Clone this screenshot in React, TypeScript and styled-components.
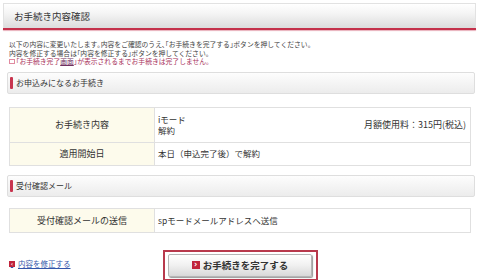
import React from 'react';
import styled, { createGlobalStyle } from 'styled-components';

const GlobalStyle = createGlobalStyle`
    body {
        margin: 0;
        background: #ffffff;
        font-family: "Noto Sans CJK JP", "Noto Sans", sans-serif;
        color: #333333;
    }
`;

const Page = styled.div`
    width: 480px;
    height: 280px;
    box-sizing: border-box;
    padding: 3px 4px 0 3px;
    overflow: hidden;
`;

const TitleBar = styled.div`
    height: 25px;
    box-sizing: border-box;
    border: 1px solid #e2e2e2;
    border-bottom: none;
    background: linear-gradient(#ffffff, #f4f4f4 40%, #dcdcdc);
    display: flex;
    align-items: center;
    padding-left: 10px;
    font-size: 9.5px;
    color: #333;
`;

const TitleLine = styled.div`
    height: 2px;
    background: #c4314b;
    box-shadow: 0 1px 1px #e8b0bb;
`;

const Intro = styled.div`
    padding: 10px 0 0 6px;
    font-size: 6.8px;
    color: #444;
    white-space: nowrap;
`;

const Line = styled.div<{ $warn?: boolean }>`
    height: 8.5px;
    line-height: 8.5px;
    display: flex;
    align-items: center;
    color: ${p => (p.$warn ? '#a8305a' : '#444')};
`;

const WarnMark = styled.span`
    display: inline-block;
    width: 6px;
    height: 5px;
    border: 1px solid #e08aa0;
    margin-right: 1px;
    box-sizing: border-box;
`;

const Under = styled.span`
    text-decoration: underline;
    color: #703060;
`;

const SectionBar = styled.div<{ $top: number }>`
    margin: ${p => p.$top}px 1px 0 4px;
    height: 22px;
    box-sizing: border-box;
    border: 1px solid #dedede;
    border-radius: 2px;
    background: linear-gradient(#fdfdfd, #ececec);
    display: flex;
    align-items: center;
    padding-left: 2px;
    font-size: 8px;
    color: #333;
`;

const SectionMark = styled.span`
    width: 3px;
    height: 12px;
    background: #c8354f;
    border-radius: 1px;
    margin-right: 3px;
`;

const Table = styled.div<{ $top: number }>`
    margin: ${p => p.$top}px 5px 0 6px;
    border: 1px solid #e0e0e0;
    border-bottom: none;
`;

const Row = styled.div<{ $h: number }>`
    display: grid;
    grid-template-columns: 145px 1fr;
    height: ${p => p.$h}px;
    border-bottom: 1px solid #e0e0e0;
`;

const Head = styled.div`
    background: #fdfbec;
    border-right: 1px solid #e0e0e0;
    display: flex;
    align-items: center;
    justify-content: center;
    font-size: 9px;
    color: #333;
`;

const Cell = styled.div`
    display: flex;
    align-items: center;
    justify-content: space-between;
    padding: 0 4px 0 3px;
    font-size: 8.5px;
    line-height: 11px;
    color: #333;
`;

const Stack = styled.div`
    display: flex;
    flex-direction: column;
`;

const Fee = styled.span`
    font-size: 9px;
`;

const Footer = styled.div`
    display: flex;
    align-items: center;
    margin-top: 17px;
    padding-left: 6px;
`;

const BackLink = styled.a`
    display: flex;
    align-items: center;
    font-size: 7.5px;
    color: #3355aa;
    text-decoration: underline;
    width: 154px;
    margin-bottom: 3px;
`;

const Arrow = styled.span<{ $size: number }>`
    display: inline-flex;
    align-items: center;
    justify-content: center;
    width: ${p => p.$size}px;
    height: ${p => p.$size}px;
    background: #c0243c;
    color: #fff;
    font-size: ${p => p.$size}px;
    line-height: 1;
    margin-right: 3px;
    font-family: "DejaVu Sans", sans-serif;
    font-weight: bold;
    text-decoration: none;
`;

const ButtonFrame = styled.div`
    width: 155px;
    height: 31px;
    box-sizing: border-box;
    border: 2px solid #b8394c;
    padding: 2px 4px 2px 3px;
    display: flex;
`;

const CompleteButton = styled.button`
    flex: 1;
    border: 1px solid #b5b5b5;
    border-radius: 2px;
    background: linear-gradient(#ffffff, #f0f0f0 50%, #d8d8d8);
    box-shadow: 1px 1px 1px #999;
    display: flex;
    align-items: center;
    justify-content: center;
    font-family: "Noto Sans CJK JP", sans-serif;
    font-size: 9.5px;
    font-weight: bold;
    color: #333;
    padding: 0;
`;

const App = () => {
    return (
        <Page>
            <GlobalStyle />
            <TitleBar>お手続き内容確認</TitleBar>
            <TitleLine />
            <Intro>
                <Line>以下の内容に変更いたします｡内容をご確認のうえ､｢お手続きを完了する｣ボタンを押してください。</Line>
                <Line>内容を修正する場合は｢内容を修正する｣ボタンを押してください。</Line>
                <Line $warn><WarnMark />｢お手続き完了<Under>画面</Under>｣が表示されるまでお手続きは完了しません。</Line>
            </Intro>
            <SectionBar $top={6}><SectionMark />お申込みになるお手続き</SectionBar>
            <Table $top={13}>
                <Row $h={34}>
                    <Head>お手続き内容</Head>
                    <Cell>
                        <Stack>
                            <span>iモード</span>
                            <span>解約</span>
                        </Stack>
                        <Fee>月額使用料：315円(税込)</Fee>
                    </Cell>
                </Row>
                <Row $h={22}>
                    <Head>適用開始日</Head>
                    <Cell>本日（申込完了後）で解約</Cell>
                </Row>
            </Table>
            <SectionBar $top={9}><SectionMark />受付確認メール</SectionBar>
            <Table $top={11}>
                <Row $h={23}>
                    <Head>受付確認メールの送信</Head>
                    <Cell>spモードメールアドレスへ送信</Cell>
                </Row>
            </Table>
            <Footer>
                <BackLink><Arrow $size={6}>‹</Arrow>内容を修正する</BackLink>
                <ButtonFrame>
                    <CompleteButton><Arrow $size={8}>›</Arrow>お手続きを完了する</CompleteButton>
                </ButtonFrame>
            </Footer>
        </Page>
    );
};

export default App;
